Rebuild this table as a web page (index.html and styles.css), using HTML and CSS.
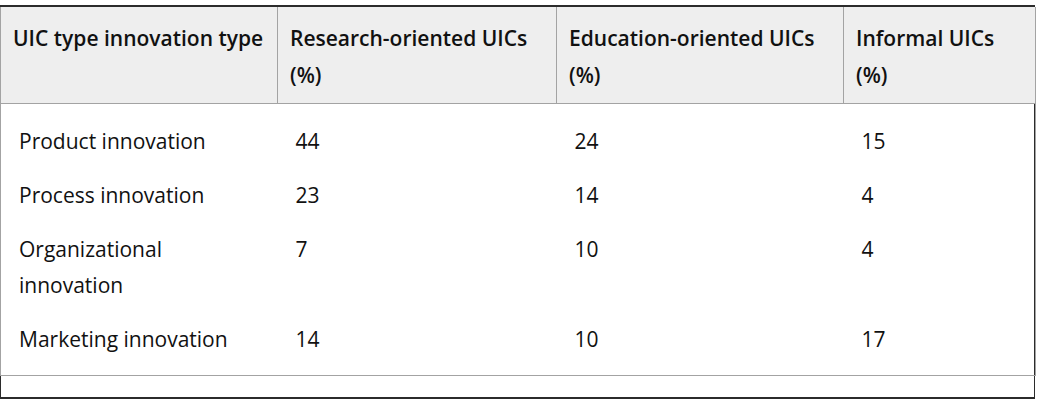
FILE: index.html
```html
<!DOCTYPE html>
<html>
<head>
<meta charset="utf-8">
<link rel="stylesheet" href="styles.css">
</head>
<body>
<div class="wrap">
  <table class="data">
    <colgroup>
      <col class="c1"><col class="c2"><col class="c3"><col class="c4">
    </colgroup>
    <thead>
      <tr>
        <th>UIC type innovation type</th>
        <th>Research-oriented UICs (%)</th>
        <th>Education-oriented UICs (%)</th>
        <th>Informal UICs (%)</th>
      </tr>
    </thead>
    <tbody>
      <tr><td>Product innovation</td><td>44</td><td>24</td><td>15</td></tr>
      <tr><td>Process innovation</td><td>23</td><td>14</td><td>4</td></tr>
      <tr><td>Organizational innovation</td><td>7</td><td>10</td><td>4</td></tr>
      <tr><td>Marketing innovation</td><td>14</td><td>10</td><td>17</td></tr>
    </tbody>
  </table>
  <div class="spacer"></div>
</div>
</body>
</html>
```
FILE: styles.css
```css
html, body {
  margin: 0;
  padding: 0;
  background: #fff;
}
body {
  padding-top: 5px;
  font-family: "Open Sans", "Noto Sans", sans-serif;
  color: #1a1a1a;
}
.wrap {
  width: 1033px;
  border-top: 2px solid #2b2b2b;
  border-bottom: 2px solid #2b2b2b;
  border-left: 1px solid #2b2b2b;
  border-right: 1px solid #2b2b2b;
}
.data {
  border-collapse: collapse;
  width: 1035px;
  margin: 0 -1px;
  table-layout: fixed;
  border: 1px solid #a3a3a3;
  border-top: none;
}
.c1 { width: 277px; }
.c2 { width: 279px; }
.c3 { width: 287px; }
.c4 { width: 192px; }
.data th {
  background: #eeeeee;
  font-weight: 600;
  font-size: 21px;
  line-height: 37px;
  text-align: left;
  vertical-align: top;
  padding: 13px 12px 9px 12px;
  border-left: 1px solid #a3a3a3;
  border-bottom: 1px solid #a3a3a3;
  color: #111;
}
.data td {
  font-size: 21px;
  line-height: 36px;
  vertical-align: top;
  padding: 18px 18px 0 18px;
  color: #111;
}
.data tbody tr:first-child td {
  padding-top: 19px;
}
.data tbody tr:last-child td {
  padding-bottom: 18px;
}
.spacer {
  height: 21px;
}
```
